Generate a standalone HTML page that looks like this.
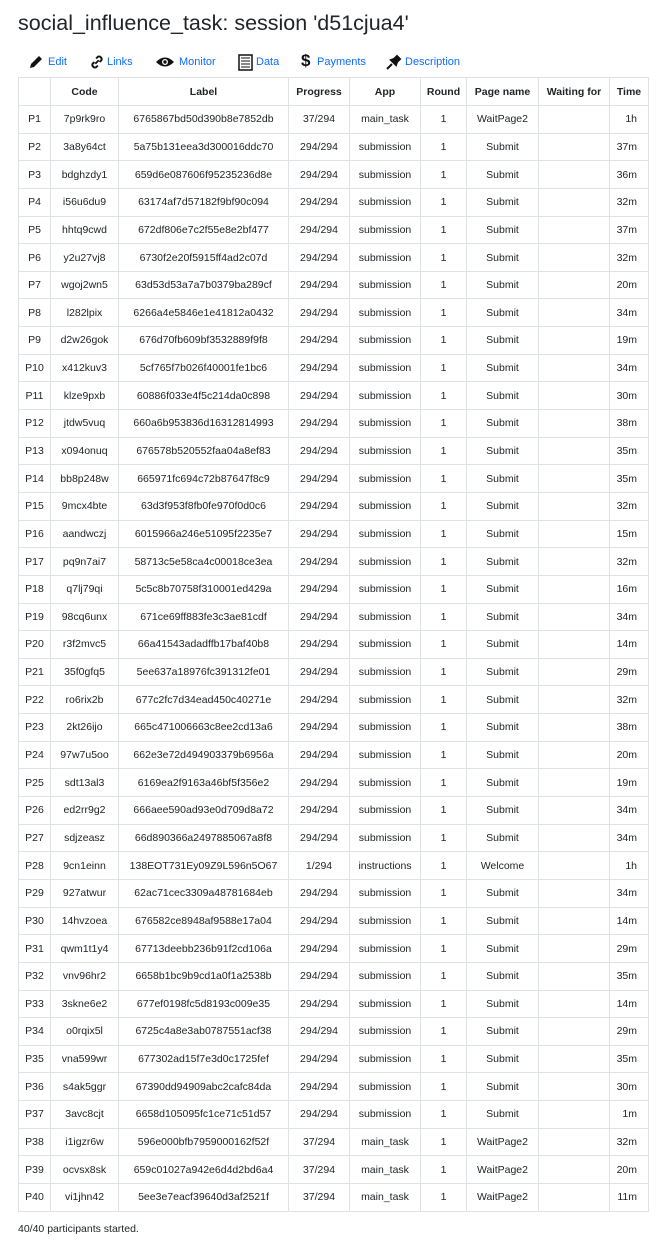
<!DOCTYPE html>
<html><head><meta charset="utf-8"><style>
body{margin:0;background:#fff;font-family:"Liberation Sans",sans-serif;color:#212529;}
h1{position:absolute;left:18px;top:9px;margin:0;font-size:21.5px;font-weight:400;line-height:28px;}
.nav{position:absolute;top:54px;left:28px;font-size:11px;color:#0d6efd;height:18px;}
.nav span{position:absolute;top:2px;white-space:nowrap;}
.nav svg{position:absolute;top:0;}
table{position:absolute;left:18px;top:77px;width:630px;border-collapse:collapse;table-layout:fixed;font-size:10.5px;}
td,th{border:1px solid #dee2e6;text-align:center;padding:0;height:26.65px;white-space:nowrap;overflow:hidden;}
th{height:27px;font-weight:700;}
td:last-child{text-align:right;padding-right:11px;}
th:last-child{text-align:center;}
.foot{position:absolute;left:18px;top:1223px;font-size:10.5px;}
</style></head><body>
<h1>social_influence_task: session 'd51cjua4'</h1>
<div class="nav">
<svg style="left:0" width="16" height="16" viewBox="0 0 16 16"><path d="M2 14l1-4 8-8 3 3-8 8z" fill="#111"/></svg><span style="left:20px">Edit</span>
<svg style="left:62px" width="14" height="16" viewBox="0 0 16 16"><path d="M6 10l4-4M7 4l2-2a3 3 0 014 4l-2 2M9 12l-2 2a3 3 0 01-4-4l2-2" stroke="#111" stroke-width="2.2" fill="none"/></svg><span style="left:79px">Links</span>
<svg style="left:127px" width="20" height="16" viewBox="0 0 20 16"><path d="M1 8Q10-1 19 8Q10 17 1 8z" fill="#111"/><circle cx="10" cy="8" r="3" fill="#fff"/><circle cx="10" cy="8" r="1.7" fill="#111"/></svg><span style="left:151px">Monitor</span>
<svg style="left:210px" width="15" height="17" viewBox="0 0 15 17"><rect x="1" y="1" width="13" height="15" fill="none" stroke="#111" stroke-width="1.5"/><path d="M3 4h9M3 7h9M3 10h9M3 13h9" stroke="#111"/></svg><span style="left:228px">Data</span>
<span style="left:273px;top:-3px;font-size:17px;font-weight:700;color:#111">$</span><span style="left:289px">Payments</span>
<svg style="left:358px" width="16" height="16" viewBox="0 0 16 16"><path d="M1 15l5-5M5 6l5 5 1-3 3-3-3-3-3 3z" stroke="#111" stroke-width="2" fill="#111"/></svg><span style="left:377px">Description</span>
</div>
<table>
<colgroup><col style="width:32px"><col style="width:68px"><col style="width:170px"><col style="width:61px"><col style="width:71px"><col style="width:46px"><col style="width:72px"><col style="width:71px"><col style="width:39px"></colgroup>
<tr><th></th><th>Code</th><th>Label</th><th>Progress</th><th>App</th><th>Round</th><th>Page name</th><th>Waiting for</th><th>Time</th></tr>
<tr><td>P1</td><td>7p9rk9ro</td><td>6765867bd50d390b8e7852db</td><td>37/294</td><td>main_task</td><td>1</td><td>WaitPage2</td><td></td><td>1h</td></tr>
<tr><td>P2</td><td>3a8y64ct</td><td>5a75b131eea3d300016ddc70</td><td>294/294</td><td>submission</td><td>1</td><td>Submit</td><td></td><td>37m</td></tr>
<tr><td>P3</td><td>bdghzdy1</td><td>659d6e087606f95235236d8e</td><td>294/294</td><td>submission</td><td>1</td><td>Submit</td><td></td><td>36m</td></tr>
<tr><td>P4</td><td>i56u6du9</td><td>63174af7d57182f9bf90c094</td><td>294/294</td><td>submission</td><td>1</td><td>Submit</td><td></td><td>32m</td></tr>
<tr><td>P5</td><td>hhtq9cwd</td><td>672df806e7c2f55e8e2bf477</td><td>294/294</td><td>submission</td><td>1</td><td>Submit</td><td></td><td>37m</td></tr>
<tr><td>P6</td><td>y2u27vj8</td><td>6730f2e20f5915ff4ad2c07d</td><td>294/294</td><td>submission</td><td>1</td><td>Submit</td><td></td><td>32m</td></tr>
<tr><td>P7</td><td>wgoj2wn5</td><td>63d53d53a7a7b0379ba289cf</td><td>294/294</td><td>submission</td><td>1</td><td>Submit</td><td></td><td>20m</td></tr>
<tr><td>P8</td><td>l282lpix</td><td>6266a4e5846e1e41812a0432</td><td>294/294</td><td>submission</td><td>1</td><td>Submit</td><td></td><td>34m</td></tr>
<tr><td>P9</td><td>d2w26gok</td><td>676d70fb609bf3532889f9f8</td><td>294/294</td><td>submission</td><td>1</td><td>Submit</td><td></td><td>19m</td></tr>
<tr><td>P10</td><td>x412kuv3</td><td>5cf765f7b026f40001fe1bc6</td><td>294/294</td><td>submission</td><td>1</td><td>Submit</td><td></td><td>34m</td></tr>
<tr><td>P11</td><td>klze9pxb</td><td>60886f033e4f5c214da0c898</td><td>294/294</td><td>submission</td><td>1</td><td>Submit</td><td></td><td>30m</td></tr>
<tr><td>P12</td><td>jtdw5vuq</td><td>660a6b953836d16312814993</td><td>294/294</td><td>submission</td><td>1</td><td>Submit</td><td></td><td>38m</td></tr>
<tr><td>P13</td><td>x094onuq</td><td>676578b520552faa04a8ef83</td><td>294/294</td><td>submission</td><td>1</td><td>Submit</td><td></td><td>35m</td></tr>
<tr><td>P14</td><td>bb8p248w</td><td>665971fc694c72b87647f8c9</td><td>294/294</td><td>submission</td><td>1</td><td>Submit</td><td></td><td>35m</td></tr>
<tr><td>P15</td><td>9mcx4bte</td><td>63d3f953f8fb0fe970f0d0c6</td><td>294/294</td><td>submission</td><td>1</td><td>Submit</td><td></td><td>32m</td></tr>
<tr><td>P16</td><td>aandwczj</td><td>6015966a246e51095f2235e7</td><td>294/294</td><td>submission</td><td>1</td><td>Submit</td><td></td><td>15m</td></tr>
<tr><td>P17</td><td>pq9n7ai7</td><td>58713c5e58ca4c00018ce3ea</td><td>294/294</td><td>submission</td><td>1</td><td>Submit</td><td></td><td>32m</td></tr>
<tr><td>P18</td><td>q7lj79qi</td><td>5c5c8b70758f310001ed429a</td><td>294/294</td><td>submission</td><td>1</td><td>Submit</td><td></td><td>16m</td></tr>
<tr><td>P19</td><td>98cq6unx</td><td>671ce69ff883fe3c3ae81cdf</td><td>294/294</td><td>submission</td><td>1</td><td>Submit</td><td></td><td>34m</td></tr>
<tr><td>P20</td><td>r3f2mvc5</td><td>66a41543adadffb17baf40b8</td><td>294/294</td><td>submission</td><td>1</td><td>Submit</td><td></td><td>14m</td></tr>
<tr><td>P21</td><td>35f0gfq5</td><td>5ee637a18976fc391312fe01</td><td>294/294</td><td>submission</td><td>1</td><td>Submit</td><td></td><td>29m</td></tr>
<tr><td>P22</td><td>ro6rix2b</td><td>677c2fc7d34ead450c40271e</td><td>294/294</td><td>submission</td><td>1</td><td>Submit</td><td></td><td>32m</td></tr>
<tr><td>P23</td><td>2kt26ijo</td><td>665c471006663c8ee2cd13a6</td><td>294/294</td><td>submission</td><td>1</td><td>Submit</td><td></td><td>38m</td></tr>
<tr><td>P24</td><td>97w7u5oo</td><td>662e3e72d494903379b6956a</td><td>294/294</td><td>submission</td><td>1</td><td>Submit</td><td></td><td>20m</td></tr>
<tr><td>P25</td><td>sdt13al3</td><td>6169ea2f9163a46bf5f356e2</td><td>294/294</td><td>submission</td><td>1</td><td>Submit</td><td></td><td>19m</td></tr>
<tr><td>P26</td><td>ed2rr9g2</td><td>666aee590ad93e0d709d8a72</td><td>294/294</td><td>submission</td><td>1</td><td>Submit</td><td></td><td>34m</td></tr>
<tr><td>P27</td><td>sdjzeasz</td><td>66d890366a2497885067a8f8</td><td>294/294</td><td>submission</td><td>1</td><td>Submit</td><td></td><td>34m</td></tr>
<tr><td>P28</td><td>9cn1einn</td><td>138EOT731Ey09Z9L596n5O67</td><td>1/294</td><td>instructions</td><td>1</td><td>Welcome</td><td></td><td>1h</td></tr>
<tr><td>P29</td><td>927atwur</td><td>62ac71cec3309a48781684eb</td><td>294/294</td><td>submission</td><td>1</td><td>Submit</td><td></td><td>34m</td></tr>
<tr><td>P30</td><td>14hvzoea</td><td>676582ce8948af9588e17a04</td><td>294/294</td><td>submission</td><td>1</td><td>Submit</td><td></td><td>14m</td></tr>
<tr><td>P31</td><td>qwm1t1y4</td><td>67713deebb236b91f2cd106a</td><td>294/294</td><td>submission</td><td>1</td><td>Submit</td><td></td><td>29m</td></tr>
<tr><td>P32</td><td>vnv96hr2</td><td>6658b1bc9b9cd1a0f1a2538b</td><td>294/294</td><td>submission</td><td>1</td><td>Submit</td><td></td><td>35m</td></tr>
<tr><td>P33</td><td>3skne6e2</td><td>677ef0198fc5d8193c009e35</td><td>294/294</td><td>submission</td><td>1</td><td>Submit</td><td></td><td>14m</td></tr>
<tr><td>P34</td><td>o0rqix5l</td><td>6725c4a8e3ab0787551acf38</td><td>294/294</td><td>submission</td><td>1</td><td>Submit</td><td></td><td>29m</td></tr>
<tr><td>P35</td><td>vna599wr</td><td>677302ad15f7e3d0c1725fef</td><td>294/294</td><td>submission</td><td>1</td><td>Submit</td><td></td><td>35m</td></tr>
<tr><td>P36</td><td>s4ak5ggr</td><td>67390dd94909abc2cafc84da</td><td>294/294</td><td>submission</td><td>1</td><td>Submit</td><td></td><td>30m</td></tr>
<tr><td>P37</td><td>3avc8cjt</td><td>6658d105095fc1ce71c51d57</td><td>294/294</td><td>submission</td><td>1</td><td>Submit</td><td></td><td>1m</td></tr>
<tr><td>P38</td><td>i1igzr6w</td><td>596e000bfb7959000162f52f</td><td>37/294</td><td>main_task</td><td>1</td><td>WaitPage2</td><td></td><td>32m</td></tr>
<tr><td>P39</td><td>ocvsx8sk</td><td>659c01027a942e6d4d2bd6a4</td><td>37/294</td><td>main_task</td><td>1</td><td>WaitPage2</td><td></td><td>20m</td></tr>
<tr><td>P40</td><td>vi1jhn42</td><td>5ee3e7eacf39640d3af2521f</td><td>37/294</td><td>main_task</td><td>1</td><td>WaitPage2</td><td></td><td>11m</td></tr>
</table>
<div class="foot">40/40 participants started.</div>
</body></html>
